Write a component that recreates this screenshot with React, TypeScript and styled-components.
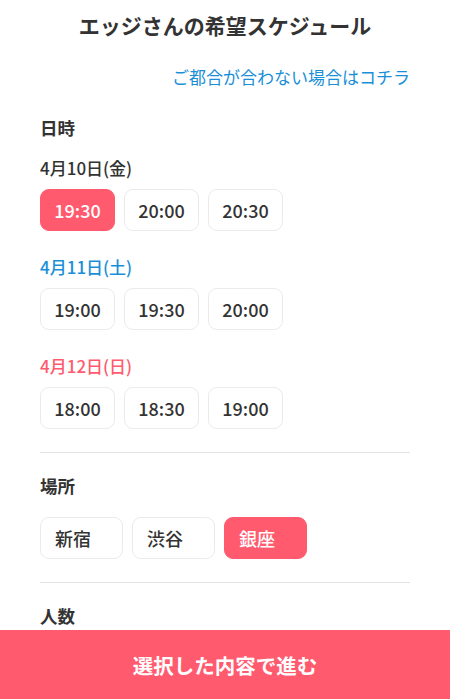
import styled, { createGlobalStyle } from "styled-components"

const GlobalStyle = createGlobalStyle`
    html, body {
        margin: 0;
        padding: 0;
        background: #fff;
        overflow: hidden;
    }
    body {
        font-family: "Noto Sans CJK JP", "Noto Sans", sans-serif;
        color: #333;
    }
`

type DayTone = 'normal' | 'sat' | 'sun'

const days: Array<{ label: string, tone: DayTone, times: string[], selected?: string }> = [
    { label: '4月10日(金)', tone: 'normal', times: ['19:30', '20:00', '20:30'], selected: '19:30' },
    { label: '4月11日(土)', tone: 'sat', times: ['19:00', '19:30', '20:00'] },
    { label: '4月12日(日)', tone: 'sun', times: ['18:00', '18:30', '19:00'] },
]
const places: string[] = ['新宿', '渋谷', '銀座']

export default function App() {
    return (
        <>
            <GlobalStyle />
            <Page>
                <Title>エッジさんの希望スケジュール</Title>
                <LinkRow>
                    <Link href="#">ご都合が合わない場合はコチラ</Link>
                </LinkRow>
                <Heading>日時</Heading>
                {days.map((d) => (
                    <DayBlock key={d.label}>
                        <DayLabel $tone={d.tone}>{d.label}</DayLabel>
                        <Chips>
                            {d.times.map((t) => (
                                <Chip key={t} $active={t === d.selected}>{t}</Chip>
                            ))}
                        </Chips>
                    </DayBlock>
                ))}
                <Divider />
                <Heading>場所</Heading>
                <PlaceChips>
                    {places.map((p) => (
                        <PlaceChip key={p} $active={p === '銀座'}>{p}</PlaceChip>
                    ))}
                </PlaceChips>
                <Divider />
                <Heading>人数</Heading>
            </Page>
            <SubmitBar>選択した内容で進む</SubmitBar>
        </>
    )
}

const Page = styled.div`
    padding: 10px 40px 120px;
    height: 699px;
    box-sizing: border-box;
`
const Title = styled.h1`
    margin: 0;
    font-size: 21px;
    line-height: 30px;
    font-weight: 700;
    text-align: center;
    color: #333;
`
const LinkRow = styled.div`
    display: flex;
    justify-content: flex-end;
    margin-top: 25px;
`
const Link = styled.a`
    font-size: 17px;
    line-height: 24px;
    color: #1a8fd8;
    text-decoration: none;
`
const Heading = styled.div`
    margin-top: 27px;
    font-size: 17.5px;
    line-height: 24px;
    font-weight: 700;
    color: #333;
`
const DayBlock = styled.div`
    margin-top: 16px;
    & + & {
        margin-top: 24px;
    }
`
const toneColor = { normal: '#333', sat: '#1a8fd8', sun: '#ff5a6e' }
const DayLabel = styled.div<{ $tone: DayTone }>`
    font-size: 17px;
    line-height: 24px;
    font-weight: 500;
    color: ${({ $tone }) => toneColor[$tone]};
`
const Chips = styled.div`
    display: flex;
    gap: 9px;
    margin-top: 9px;
`
const Chip = styled.button<{ $active?: boolean }>`
    width: 75px;
    height: 42px;
    box-sizing: border-box;
    border-radius: 9px;
    border: 1px solid ${({ $active }) => $active ? '#ff5a6e' : '#ebebeb'};
    background: ${({ $active }) => $active ? '#ff5a6e' : '#fff'};
    color: ${({ $active }) => $active ? '#fff' : '#333'};
    font-family: "Noto Sans CJK JP", "Noto Sans", sans-serif;
    font-size: 18px;
    font-weight: 500;
    padding: 0;
    cursor: pointer;
`
const PlaceChips = styled.div`
    display: flex;
    gap: 9px;
    margin-top: 19px;
`
const PlaceChip = styled(Chip)`
    width: 83px;
    text-align: left;
    padding-left: 14px;
`
const Divider = styled.hr`
    margin: 23px 0 0;
    border: none;
    border-top: 1px solid #e3e3e3;
    & + ${Heading} {
        margin-top: 21px;
    }
`
const SubmitBar = styled.button`
    position: fixed;
    left: 0;
    right: 0;
    bottom: 0;
    height: 69px;
    border: none;
    background: #ff5a6e;
    color: #fff;
    font-family: "Noto Sans CJK JP", "Noto Sans", sans-serif;
    font-size: 20.5px;
    font-weight: 700;
    cursor: pointer;
`
